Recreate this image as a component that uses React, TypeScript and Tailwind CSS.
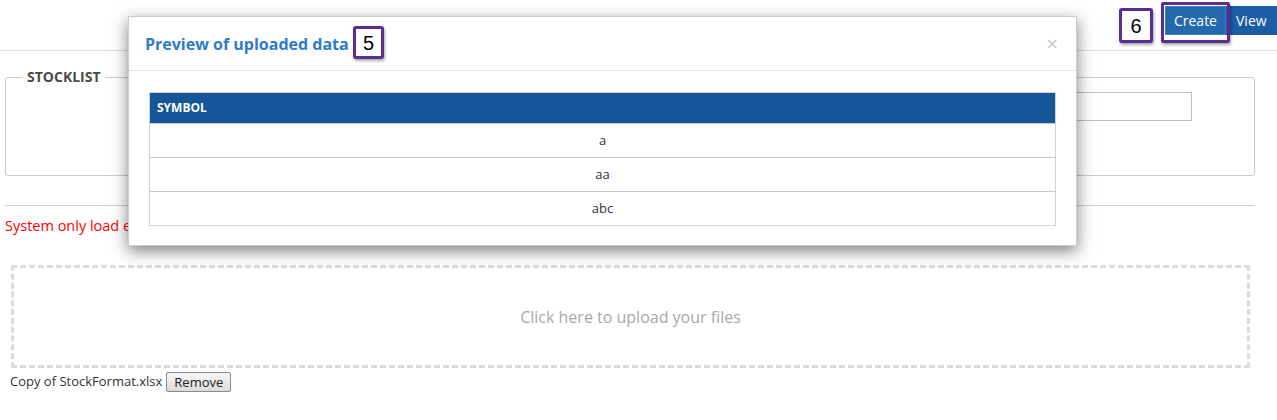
import React from "react";

export default function App() {
  const rows = ["a", "aa", "abc"];
  return (
    <div
      className="relative w-[1277px] h-[420px] overflow-hidden bg-white text-[#333]"
      style={{ fontFamily: '"Open Sans", "Noto Sans", sans-serif' }}
    >
      {/* Top bar */}
      <div className="flex h-[51px] items-start justify-end border-b border-[#dedede] pt-[6px]">
        <button className="h-[29px] border border-[#3d7ec2] bg-[#2468ae] px-[8px] text-[14px] text-white">
          Create
        </button>
        <button className="h-[29px] w-[51px] bg-[#1a5ca6] pl-[10px] text-left text-[14px] text-white">
          View
        </button>
      </div>

      {/* Main content */}
      <div className="ml-[5px] w-[1250px]">
        <fieldset className="mt-[17px] h-[108px] rounded-[3px] border border-[#cccccc]">
          <legend className="ml-[17px] px-[4px] text-[14px] font-bold leading-[18px] text-[#4a4a4a]">
            STOCKLIST
          </legend>
          <div className="flex justify-end pr-[62px] pt-[6px]">
            <input className="h-[29px] w-[460px] border border-[#bdbdbd] bg-white" />
          </div>
        </fieldset>

        <div className="mt-[29px] border-t border-[#cfcfcf]" />

        <p className="mt-[10px] text-[14.5px] leading-[20px] text-[#ff0000]">
          System only load excel file with .xlsx extension
        </p>

        <div className="ml-[6px] mr-[5px] mt-[29px] flex h-[103px] items-center justify-center border-[3px] border-dashed border-[#dcdcdc]">
          <span className="text-[16px] text-[#a8a8a8]">Click here to upload your files</span>
        </div>

        <div className="ml-[5px] mt-[4px] flex items-center gap-[4px] text-[13px] text-[#333]">
          <span>Copy of StockFormat.xlsx</span>
          <button className="h-[20px] rounded-[2px] border border-[#8a8a8a] bg-gradient-to-b from-[#f6f6f6] to-[#dcdcdc] px-[7px] text-[13px] leading-[16px] text-[#222]">
            Remove
          </button>
        </div>
      </div>

      {/* Modal */}
      <div className="absolute left-[128px] top-[16px] w-[949px] border border-[rgba(0,0,0,0.2)] bg-white shadow-[0_5px_15px_rgba(0,0,0,0.5)]">
        <div className="flex h-[54px] items-center justify-between border-b border-[#e5e5e5] pl-[16px] pr-[16px]">
          <h4 className="text-[16px] font-bold text-[#2d7bca]">Preview of uploaded data</h4>
          <span className="pr-[2px] text-[20px] leading-none text-[#c4c4c4]">×</span>
        </div>
        <div className="px-[20px] pb-[19px] pt-[21px]">
          <table className="w-full border-collapse border border-[#d3d3d3]">
            <thead>
              <tr className="h-[31px] bg-[#165597]">
                <th className="px-[7px] text-left text-[12px] font-bold text-white">SYMBOL</th>
              </tr>
            </thead>
            <tbody>
              {rows.map((r) => (
                <tr key={r} className="h-[34px] border-t border-[#c3c8d3]">
                  <td className="text-center text-[13px] text-[#333]">{r}</td>
                </tr>
              ))}
            </tbody>
          </table>
        </div>
      </div>

      {/* Annotation 5 */}
      <div
        className="absolute left-[353px] top-[26px] flex h-[33px] w-[31px] items-center justify-center rounded-[3px] border-[3px] border-[#5c2d91] bg-white text-[20px] text-black shadow-[1px_2px_3px_rgba(0,0,0,0.35)]"
        style={{ fontFamily: '"Liberation Sans", Arial, sans-serif' }}
      >
        5
      </div>

      {/* Annotation 6 */}
      <div
        className="absolute left-[1119px] top-[8px] flex h-[35px] w-[34px] items-center justify-center rounded-[3px] border-[3px] border-[#5c2d91] bg-white text-[20px] text-black shadow-[1px_2px_3px_rgba(0,0,0,0.35)]"
        style={{ fontFamily: '"Liberation Sans", Arial, sans-serif' }}
      >
        6
      </div>

      {/* Highlight around Create */}
      <div className="absolute left-[1161px] top-[2px] h-[41px] w-[69px] rounded-[2px] border-[3px] border-[#5c2d91] shadow-[1px_2px_3px_rgba(0,0,0,0.35)]" />
    </div>
  );
}
